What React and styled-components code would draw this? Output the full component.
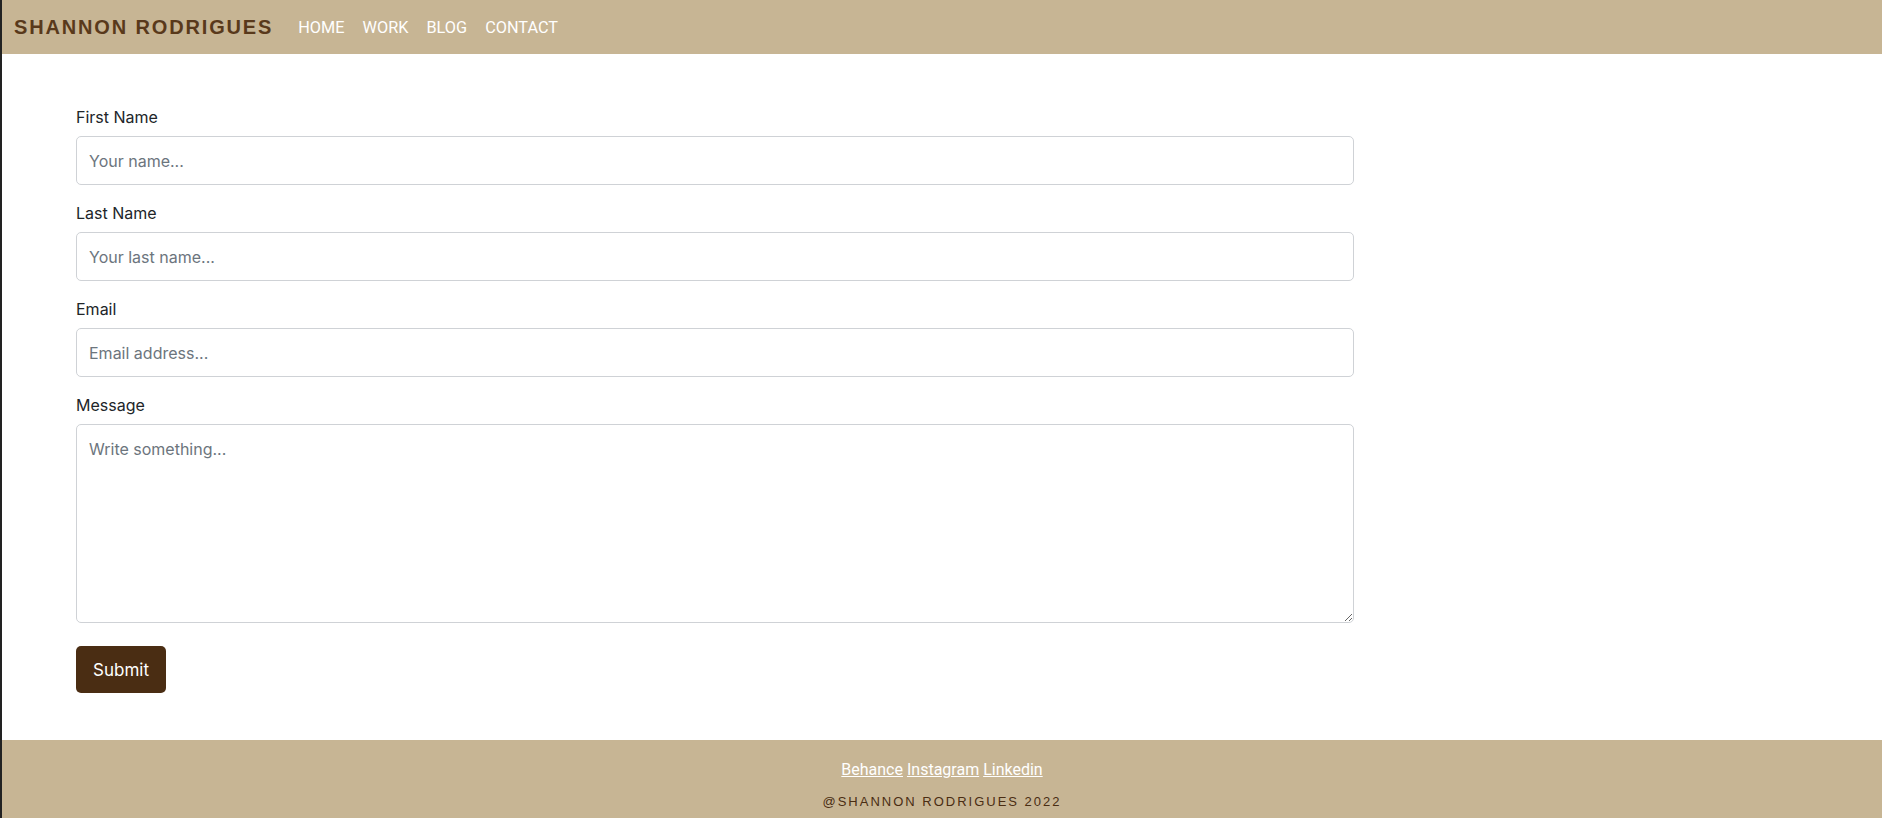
import React from 'react'
import styled, { createGlobalStyle } from 'styled-components'

const GlobalStyle = createGlobalStyle`
  html, body {
    margin: 0;
    padding: 0;
    background: #ffffff;
  }
  * {
    box-sizing: border-box;
  }
`

const Page = styled.div`
  min-height: 100vh;
  display: flex;
  flex-direction: column;
  border-left: 2px solid #222222;
`

const Header = styled.header`
  height: 54px;
  background: #c7b594;
  display: flex;
  align-items: center;
  padding-left: 12px;
`

const Logo = styled.a`
  font-family: "Liberation Sans", Arial, sans-serif;
  font-weight: 700;
  font-size: 20px;
  letter-spacing: 1.85px;
  color: #59391b;
  text-decoration: none;
`

const Nav = styled.nav`
  display: flex;
  gap: 18px;
  margin-left: 25px;
`

const NavLink = styled.a`
  font-family: Roboto, "Liberation Sans", sans-serif;
  font-size: 16.3px;
  color: #ffffff;
  text-decoration: none;
`

const Main = styled.main`
  padding: 51px 0 47px 74px;
`

const Form = styled.form`
  width: 1278px;
  font-family: Inter, "Noto Sans", sans-serif;
`

const Field = styled.div`
  margin-bottom: ${(p) => (p.$last ? '23px' : '16px')};
`

const Label = styled.label`
  display: block;
  font-size: 16px;
  line-height: 24px;
  color: #212529;
  margin-bottom: 7px;
`

const Input = styled.input`
  display: block;
  width: 100%;
  height: 49px;
  padding: 12px 12px;
  font-family: inherit;
  font-size: 16px;
  line-height: 24px;
  color: #212529;
  border: 1px solid #cfd2d6;
  border-radius: 5px;
  background: #fff;
  outline: none;

  &::placeholder {
    color: #6c757d;
  }
`

const TextArea = styled.textarea`
  display: block;
  width: 100%;
  height: 199px;
  padding: 12px 12px;
  font-family: inherit;
  font-size: 16px;
  line-height: 24px;
  color: #212529;
  border: 1px solid #cfd2d6;
  border-radius: 5px;
  background: #fff;
  outline: none;
  resize: vertical;

  &::placeholder {
    color: #6c757d;
  }
`

const SubmitButton = styled.button`
  display: block;
  width: 90px;
  height: 47px;
  padding: 0;
  border: none;
  border-radius: 5px;
  background: #4a2d13;
  color: #ffffff;
  font-family: inherit;
  font-size: 17px;
  cursor: pointer;
`

const Footer = styled.footer`
  flex: 1;
  background: #c7b594;
  text-align: center;
  padding: 18px 0 8px;
`

const FooterLinks = styled.div`
  font-family: Roboto, "Liberation Sans", sans-serif;
  font-size: 16px;
  line-height: 24px;
`

const FooterLink = styled.a`
  color: #ffffff;
  text-decoration: underline;
`

const Copyright = styled.p`
  margin: 12px 0 0;
  font-family: "Liberation Sans", Arial, sans-serif;
  font-size: 13px;
  letter-spacing: 2px;
  color: #4a2d13;
`

function App() {
  return (
    <Page>
      <GlobalStyle />
      <Header>
        <Logo href="#">SHANNON RODRIGUES</Logo>
        <Nav>
          <NavLink href="#">HOME</NavLink>
          <NavLink href="#">WORK</NavLink>
          <NavLink href="#">BLOG</NavLink>
          <NavLink href="#">CONTACT</NavLink>
        </Nav>
      </Header>
      <Main>
        <Form onSubmit={(e) => e.preventDefault()}>
          <Field>
            <Label htmlFor="fname">First Name</Label>
            <Input id="fname" type="text" placeholder="Your name..." />
          </Field>
          <Field>
            <Label htmlFor="lname">Last Name</Label>
            <Input id="lname" type="text" placeholder="Your last name..." />
          </Field>
          <Field>
            <Label htmlFor="email">Email</Label>
            <Input id="email" type="email" placeholder="Email address..." />
          </Field>
          <Field $last>
            <Label htmlFor="message">Message</Label>
            <TextArea id="message" placeholder="Write something..." />
          </Field>
          <SubmitButton type="submit">Submit</SubmitButton>
        </Form>
      </Main>
      <Footer>
        <FooterLinks>
          <FooterLink href="#">Behance</FooterLink>{' '}
          <FooterLink href="#">Instagram</FooterLink>{' '}
          <FooterLink href="#">Linkedin</FooterLink>
        </FooterLinks>
        <Copyright>@SHANNON RODRIGUES 2022</Copyright>
      </Footer>
    </Page>
  )
}

export default App
